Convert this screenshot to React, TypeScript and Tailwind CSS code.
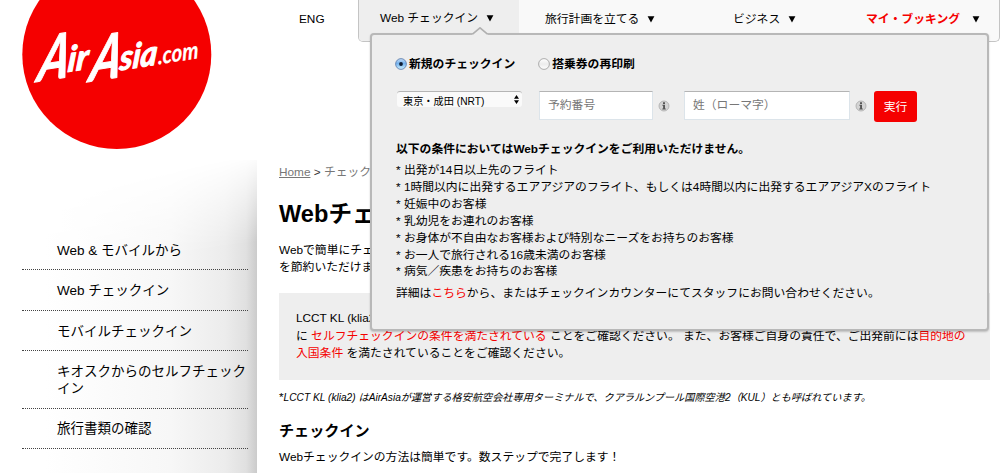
import type { ReactNode } from "react";

const sideLinks = [
  "Web & モバイルから",
  "Web チェックイン",
  "モバイルチェックイン",
  "キオスクからのセルフチェックイン",
  "旅行書類の確認",
];

const restrictions = [
  "出発が14日以上先のフライト",
  "1時間以内に出発するエアアジアのフライト、もしくは4時間以内に出発するエアアジアXのフライト",
  "妊娠中のお客様",
  "乳幼児をお連れのお客様",
  "お身体が不自由なお客様および特別なニーズをお持ちのお客様",
  "お一人で旅行される16歳未満のお客様",
  "病気／疾患をお持ちのお客様",
];

function Red({ children }: { children: ReactNode }) {
  return <a className="text-[#f50000]">{children}</a>;
}

function Caret() {
  return (
    <svg className="h-[7px] w-2 shrink-0" viewBox="0 0 8 7">
      <path d="M0.6 0.3h6.8L4 6.5z" fill="#000" />
    </svg>
  );
}

function Info() {
  return (
    <svg className="h-3 w-3 shrink-0" viewBox="0 0 12 12">
      <circle cx="6" cy="6" r="5" fill="#d4d4d4" stroke="#aaa" strokeWidth="0.8" />
      <path d="M5 2.3h2v1.6H5zM4.4 4.8H7v3.8h.8v.9H4.3v-.9h.8V5.7h-.7z" fill="#555" />
    </svg>
  );
}

function Logo() {
  return (
    <svg className="block h-[150px] w-[192px]" viewBox="0 0 192 150" aria-label="AirAsia.com">
      <circle cx="94.8" cy="54.5" r="94.5" fill="#f50000" />
      <g
        fill="#fff"
        stroke="#fff"
        strokeLinejoin="round"
        fontFamily="Lato, 'Liberation Sans', sans-serif"
        fontStyle="italic"
        fontWeight="700"
      >
        <text transform="translate(14 82) rotate(-9) skewX(-20)" fontSize="61" textLength="31" lengthAdjust="spacingAndGlyphs" strokeWidth="1">A</text>
        <text transform="translate(45 72) rotate(-9) skewX(-14)" fontSize="35" textLength="21" lengthAdjust="spacingAndGlyphs" strokeWidth="1.1">ir</text>
        <text transform="translate(66 82) rotate(-9) skewX(-20)" fontSize="61" textLength="31" lengthAdjust="spacingAndGlyphs" strokeWidth="1">A</text>
        <text transform="translate(97 70.5) rotate(-9) skewX(-14)" fontSize="34" textLength="38" lengthAdjust="spacingAndGlyphs" strokeWidth="1.1">sia</text>
        <text transform="translate(136 64.5) rotate(-9) skewX(-8)" fontSize="24" textLength="41" lengthAdjust="spacingAndGlyphs" strokeWidth="0.2">.com</text>
      </g>
    </svg>
  );
}

function Radio({ checked, label }: { checked?: boolean; label: string }) {
  return (
    <label className="flex items-center gap-[2px]">
      <svg className="h-3 w-3" viewBox="0 0 12 12">
        <defs>
          <linearGradient id="radioOn" x1="0" y1="0" x2="0" y2="1">
            <stop offset="0" stopColor="#c4dcf5" />
            <stop offset="0.45" stopColor="#74b2ee" />
            <stop offset="1" stopColor="#cdf1ff" />
          </linearGradient>
          <linearGradient id="radioOff" x1="0" y1="0" x2="0" y2="1">
            <stop offset="0" stopColor="#fff" />
            <stop offset="0.5" stopColor="#ececec" />
            <stop offset="1" stopColor="#fff" />
          </linearGradient>
        </defs>
        <circle
          cx="6"
          cy="6"
          r="5.4"
          fill={checked ? "url(#radioOn)" : "url(#radioOff)"}
          stroke={checked ? "#5877a8" : "#999"}
          strokeWidth="0.8"
        />
        {checked && <circle cx="6" cy="6" r="1.9" fill="#0d1c33" />}
      </svg>
      <span>{label}</span>
    </label>
  );
}

function CheckinPanel() {
  return (
    <div className="absolute left-[370px] top-[33px] h-[298px] w-[619px] rounded-[4px] border-2 border-[#b8b8b8] bg-[#eee] pl-6 text-[11.8px] shadow-[0_1px_2px_rgba(0,0,0,0.2)]">
      <svg className="absolute left-[100px] top-[-8px] h-[9px] w-4" viewBox="0 0 16 9">
        <path d="M0 8L8 1L16 8V9H0z" fill="#eee" />
        <path d="M0.5 7.2L8 0.8L15.5 7.2" fill="none" stroke="#b0b0b0" strokeWidth="1.6" />
      </svg>
      <div className="-ml-px mt-[21px] flex h-4 items-center gap-[23px] font-bold leading-4">
        <Radio checked label="新規のチェックイン" />
        <Radio label="搭乗券の再印刷" />
      </div>
      <div className="mt-[19px] flex h-[31px] items-start">
        <div className="ml-[1px] flex h-4 w-[125px] items-center justify-between rounded-[3px] border-t border-[#b5b5b5] bg-[#fafafa] pl-[6px] pr-[3px] text-[10.2px] leading-4">
          <span className="pt-1">東京・成田 (NRT)</span>
          <svg className="h-[9px] w-[5px]" viewBox="0 0 5 9">
            <path d="M0 3.8L2.5 0L5 3.8zM0 5.2h5L2.5 9z" fill="#000" />
          </svg>
        </div>
        <div className="ml-[17px] h-[29px] w-[114px] border border-[#dce4ea] border-t-[#b4b4b4] bg-white pl-2 leading-[27px] text-[#777]">予約番号</div>
        <div className="ml-[5px] mt-[9px]"><Info /></div>
        <div className="ml-[14px] h-[29px] w-[166px] border border-[#dce4ea] border-t-[#b4b4b4] bg-white pl-2 leading-[27px] text-[#777]">姓（ローマ字）</div>
        <div className="ml-[5px] mt-[9px]"><Info /></div>
        <button className="ml-[7px] h-[31px] w-[43px] rounded-[3px] bg-[#f50000] text-[11.8px] leading-[30px] text-white">実行</button>
      </div>
      <p className="mt-[19px] font-bold leading-[17px]">以下の条件においてはWebチェックインをご利用いただけません。</p>
      <ul className="mt-[4.4px] whitespace-nowrap leading-[16.85px]">
        {restrictions.map((text) => (
          <li key={text}>* {text}</li>
        ))}
      </ul>
      <p className="mt-[4.6px] leading-[17px]">
        詳細は<Red>こちら</Red>から、またはチェックインカウンターにてスタッフにお問い合わせください。
      </p>
    </div>
  );
}

export default function App() {
  return (
    <div className="relative flex h-[473px] w-[1000px] overflow-hidden bg-white font-['Liberation_Sans','Noto_Sans_CJK_JP',sans-serif] text-[11.8px] text-black">
      <aside className="relative h-full w-[257px] shrink-0">
        <div className="absolute inset-x-0 bottom-0 top-[160px] bg-[linear-gradient(to_right,#fff_45px,#f7f7f7_170px,#ececec_225px,#e0e0e0_246px,#cbcbcb_257px)] [mask-image:linear-gradient(170deg,transparent_38px,black_125px)]" />
        <div className="relative pl-[22px]">
          <Logo />
          <nav className="mt-[80px] w-[226px] text-[13.5px] leading-[17px]">
            {sideLinks.map((text) => (
              <a key={text} className="block border-b border-dotted border-[#444] pb-[10.6px] pl-[35px] pt-[11.8px]">
                {text}
              </a>
            ))}
          </nav>
        </div>
      </aside>
      <main className="flex w-[743px] flex-col pl-[22px]">
        <header className="flex h-[42px] leading-4">
          <span className="w-[79px] pl-5 pt-[11px]">ENG</span>
          <nav className="flex h-[42px] w-[642px] overflow-hidden rounded-b-[5px] border border-t-0 border-[#c4c4c4] bg-[#f9f9f9]">
            <div className="flex h-full w-[160px] items-start gap-[8px] bg-[#eee] pl-[21px] pt-[10px]">
              <span>Web チェックイン</span>
              <span className="pt-[5px]"><Caret /></span>
            </div>
            <div className="flex w-[188px] gap-[8px] pl-[26px] pt-[11px]">
              <span>旅行計画を立てる</span>
              <span className="pt-[5px]"><Caret /></span>
            </div>
            <div className="flex w-[133px] gap-[8px] pl-[26px] pt-[11px]">
              <span>ビジネス</span>
              <span className="pt-[5px]"><Caret /></span>
            </div>
            <div className="flex gap-[12px] pl-[26px] pt-[11px]">
              <span className="font-bold text-[#f50000]">マイ・ブッキング</span>
              <span className="pt-[5px]"><Caret /></span>
            </div>
          </nav>
        </header>
        <div className="mt-[122px] whitespace-nowrap leading-4 text-[#777]">
          <a className="underline">Home</a> <span className="text-[#333]">&gt;</span> チェック
        </div>
        <h1 className="mt-[19px] text-[23.6px] font-bold leading-[31px]">Webチェックイン</h1>
        <p className="mt-[12px] whitespace-nowrap leading-[17px]">
          Webで簡単にチェ
          <br />
          を節約いただけま
        </p>
        <section className="mt-[17px] h-[87px] w-[711px] whitespace-nowrap bg-[#eee] pl-[17px] pt-[17px] leading-[17.5px]">
          <p>
            LCCT KL (klia2)
            <br />
            に <Red>セルフチェックインの条件を満たされている</Red> ことをご確認ください。 また、お客様ご自身の責任で、ご出発前には<Red>目的地の</Red>
            <br />
            <Red>入国条件</Red> を満たされていることをご確認ください。
          </p>
        </section>
        <p className="mt-[10px] whitespace-nowrap text-[10.17px] italic leading-4">
          <span className="text-[11.8px] not-italic leading-none">*</span>LCCT KL (klia2) はAirAsiaが運営する格安航空会社専用ターミナルで、クアラルンプール国際空港2（KUL）とも呼ばれています。
        </p>
        <h2 className="mt-[14px] text-[15.1px] font-bold leading-[21px]">チェックイン</h2>
        <p className="mt-[8px] leading-[17px]">Webチェックインの方法は簡単です。数ステップで完了します！</p>
      </main>
      <CheckinPanel />
    </div>
  );
}
